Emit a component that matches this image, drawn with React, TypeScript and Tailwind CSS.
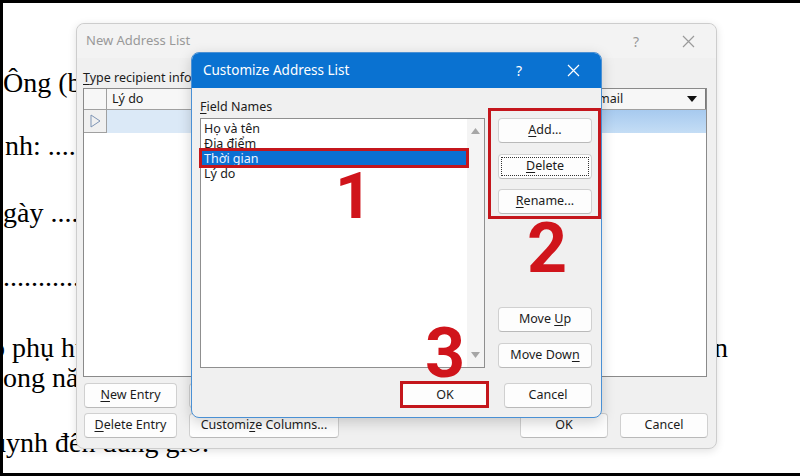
import React from "react";

const UI = "font-['Noto_Sans','Open_Sans',sans-serif]";

function Btn({
  children,
  className = "",
}: {
  children: React.ReactNode;
  className?: string;
}) {
  return (
    <div
      className={
        "relative flex h-[25px] shrink-0 items-center justify-center rounded-[4px] border border-[#d0d0d0] border-b-[#b9b9b9] bg-[#fdfdfd] text-[12.5px] leading-none text-[#1b1b1b] " +
        className
      }
    >
      <span className="whitespace-pre">{children}</span>
    </div>
  );
}

function U({ children }: { children: React.ReactNode }) {
  return <span className="underline underline-offset-[2px]">{children}</span>;
}

function XIcon({ color }: { color: string }) {
  return (
    <svg width="13" height="13" viewBox="0 0 13 13">
      <path d="M1 1 L12 12 M12 1 L1 12" stroke={color} strokeWidth="1.2" fill="none" />
    </svg>
  );
}

function OuterDialog() {
  return (
    <div
      className={
        "absolute left-[76px] top-[23px] flex h-[426px] w-[641px] flex-col rounded-[8px] border border-[#cdcdcd] bg-[#f0f0f0] shadow-[0_2px_8px_rgba(0,0,0,0.12)] " +
        UI
      }
    >
      {/* title bar */}
      <div className="flex h-[34px] items-center rounded-t-[8px] bg-[#f3f3f3] pl-[9px] pr-[5px] text-[13px] text-[#999999]">
        <span>New Address List</span>
        <span className="ml-auto w-[46px] text-center text-[14px]">?</span>
        <span className="ml-[6px] flex w-[46px] justify-center">
          <XIcon color="#9a9a9a" />
        </span>
      </div>
      <div className="mt-[11px] mb-[1px] h-[18px] w-[114px] overflow-hidden whitespace-nowrap pl-[6px] text-[12.5px] leading-[18px] text-[#1b1b1b]">
        <U>T</U>ype recipient information
      </div>
      {/* table */}
      <div className="mx-[6px] flex h-[289px] w-[624px] flex-col border border-[#8a8a8a] bg-white text-[12.5px] text-[#1b1b1b]">
        <div className="flex h-[21px] border-b border-[#a0a0a0] bg-[#f7f7f7]">
          <div className="w-[23px] border-r border-[#a0a0a0]" />
          <div className="flex w-[200px] items-center border-r border-[#c8c8c8] pl-[5px]">Lý do</div>
          <div className="flex-1 border-r border-[#c8c8c8]" />
          <div className="relative flex w-[124px] items-center border-r border-[#7a7a7a] pl-[5px]">
            E-mail
            <svg className="absolute right-[8px] top-[7px]" width="10" height="7" viewBox="0 0 10 7">
              <path d="M0 0 L10 0 L5 6 Z" fill="#111" />
            </svg>
          </div>
        </div>
        <div className="flex h-[23px]">
          <div className="flex w-[23px] items-center justify-center border-r border-b border-[#a0a0a0] bg-[#f0f0f0]">
            <svg width="11" height="14" viewBox="0 0 11 14">
              <path d="M1 1 L10 7 L1 13 Z" fill="none" stroke="#7f95b5" strokeWidth="1" />
            </svg>
          </div>
          <div className="w-[200px] bg-[#dbe9f7]" />
          <div className="flex-1 bg-[#dbe9f7]" />
          <div className="w-[124px] bg-gradient-to-b from-[#a7caef] to-[#c4ddf5]" />
        </div>
        <div className="flex-1" />
      </div>
      {/* bottom buttons */}
      <div className="mt-[6px] flex pl-[7px]">
        <Btn className="w-[93px]">
          <U>N</U>ew Entry
        </Btn>
        <Btn className="ml-[12px] w-[93px]">
          <U>F</U>ind...
        </Btn>
      </div>
      <div className="mt-[5px] flex pl-[7px] pr-[8px]">
        <Btn className="w-[93px]">
          <U>D</U>elete Entry
        </Btn>
        <Btn className="ml-[12px] w-[150px] border-[#3f7fc0] border-b-[#3f7fc0]">
          Customi<U>z</U>e Columns...
        </Btn>
        <Btn className="ml-auto w-[88px]">OK</Btn>
        <Btn className="ml-[12px] w-[88px]">Cancel</Btn>
      </div>
    </div>
  );
}

function InnerDialog() {
  const items = ["Họ và tên", "Địa điểm", "Thời gian", "Lý do"];
  return (
    <div
      className={
        "absolute left-[191px] top-[52px] flex h-[366px] w-[411px] flex-col rounded-[8px] border border-[#4a90d4] bg-[#f0f0f0] shadow-[0_4px_14px_rgba(0,0,0,0.18)] " +
        UI
      }
    >
      <div className="flex h-[35px] items-center rounded-t-[7px] bg-[#0a72d1] pl-[11px] pr-[5px] text-[13.5px] text-white">
        <span>Customize Address List</span>
        <span className="ml-auto w-[46px] text-center text-[14px]">?</span>
        <span className="ml-[8px] flex w-[46px] justify-center">
          <XIcon color="#ffffff" />
        </span>
      </div>
      <div className="mt-[10px] h-[18px] pl-[8px] text-[12.5px] leading-[18px] text-[#1b1b1b]">
        <U>F</U>ield Names
      </div>
      <div className="mt-[2px] flex h-[250px] pl-[8px] pr-[9px]">
        {/* listbox */}
        <div className="flex h-[250px] w-[285px] border border-[#8f8f8f] bg-white">
          <div className="flex-1 pt-[2px] text-[12.5px] leading-[15px] text-[#1b1b1b]">
            {items.map((t, i) =>
              i === 2 ? (
                <div key={t} className="mx-[1px] h-[15px] bg-[#0b6fd2] pl-[2px] text-[#eaf3ff]">
                  {t}
                </div>
              ) : (
                <div key={t} className="h-[15px] pl-[3px]">
                  {t}
                </div>
              )
            )}
          </div>
          <div className="flex w-[17px] flex-col items-center justify-between bg-[#f4f4f4] py-[9px]">
            <svg width="9" height="6" viewBox="0 0 9 6">
              <path d="M0 6 L9 6 L4.5 0 Z" fill="#a6a6a6" />
            </svg>
            <svg width="9" height="6" viewBox="0 0 9 6">
              <path d="M0 0 L9 0 L4.5 6 Z" fill="#a6a6a6" />
            </svg>
          </div>
        </div>
        {/* right buttons */}
        <div className="ml-auto flex w-[94px] flex-col justify-between">
          <div className="flex flex-col">
            <Btn className="w-[94px]">
              <U>A</U>dd...
            </Btn>
            <div className="relative mt-[11px]">
              <Btn className="w-[94px] border-[#4f7fae] border-b-[#4f7fae]">
                <U>D</U>elete
              </Btn>
              <div className="pointer-events-none absolute inset-[3px] border border-dotted border-[#333]" />
            </div>
            <Btn className="mt-[10px] w-[94px]">
              <U>R</U>ename...
            </Btn>
          </div>
          <div className="flex flex-col">
            <Btn className="w-[94px]">
              Move <U>U</U>p
            </Btn>
            <Btn className="mt-[11px] w-[94px]">
              Move Dow<U>n</U>
            </Btn>
          </div>
        </div>
      </div>
      <div className="mt-[15px] flex justify-end pr-[9px]">
        <Btn className="w-[88px]">OK</Btn>
        <Btn className="ml-[15px] w-[88px]">Cancel</Btn>
      </div>
    </div>
  );
}

export default function App() {
  return (
    <div className="relative h-[476px] w-[800px] overflow-hidden bg-black pl-[3px] pt-[3px]">
      <div className="flex h-[470px] w-[797px] flex-col overflow-hidden bg-white font-['Liberation_Serif','Times_New_Roman',serif] text-[28px] text-black">
        <div className="mt-[65px] h-[30px] w-[73px] overflow-hidden whitespace-nowrap leading-[30px]">Ông (bà)</div>
        <div className="mt-[33px] h-[30px] w-[73px] overflow-hidden whitespace-nowrap pl-[2px] leading-[30px]">nh: ..........</div>
        <div className="mt-[37px] h-[30px] w-[73px] overflow-hidden whitespace-nowrap leading-[30px]">gày ..........</div>
        <div className="mt-[34px] h-[30px] w-[73px] overflow-hidden whitespace-nowrap leading-[30px]">....................</div>
        <div className="mt-[41px] flex h-[30px] justify-between whitespace-nowrap pr-[72px] leading-[30px]">
          <span className="w-[73px] overflow-hidden">
            <span className="ml-[-12px] inline-block">o phụ huynh</span>
          </span>
          <span>n</span>
        </div>
        <div className="h-[30px] w-[73px] overflow-hidden whitespace-nowrap leading-[30px]">ong năm</div>
        <div className="mt-[35px] h-[30px] overflow-hidden whitespace-nowrap leading-[30px]">
          <span className="ml-[-11px] inline-block">uynh đến đúng giờ.</span>
        </div>
      </div>

      <OuterDialog />
      <InnerDialog />

      {/* red highlight boxes */}
      <div className="absolute left-[199px] top-[148px] h-[20px] w-[270px] border-[3px] border-[#c4161c]" />
      <div className="absolute left-[488px] top-[108px] h-[111px] w-[113px] border-[3px] border-[#c4161c]" />
      <div className="absolute left-[400px] top-[381px] h-[27px] w-[89px] border-[3px] border-[#c4161c]" />

      {/* step numbers */}
      <div className="absolute left-[335px] top-[172px] font-['Roboto',sans-serif] text-[65px] font-bold leading-[48px] text-[#d0141b]">1</div>
      <div className="absolute left-[527px] top-[222px] font-['Roboto',sans-serif] text-[70px] font-bold leading-[52px] text-[#d0141b]">2</div>
      <div className="absolute left-[425px] top-[327px] font-['Roboto',sans-serif] text-[70px] font-bold leading-[52px] text-[#d0141b]">3</div>
    </div>
  );
}
